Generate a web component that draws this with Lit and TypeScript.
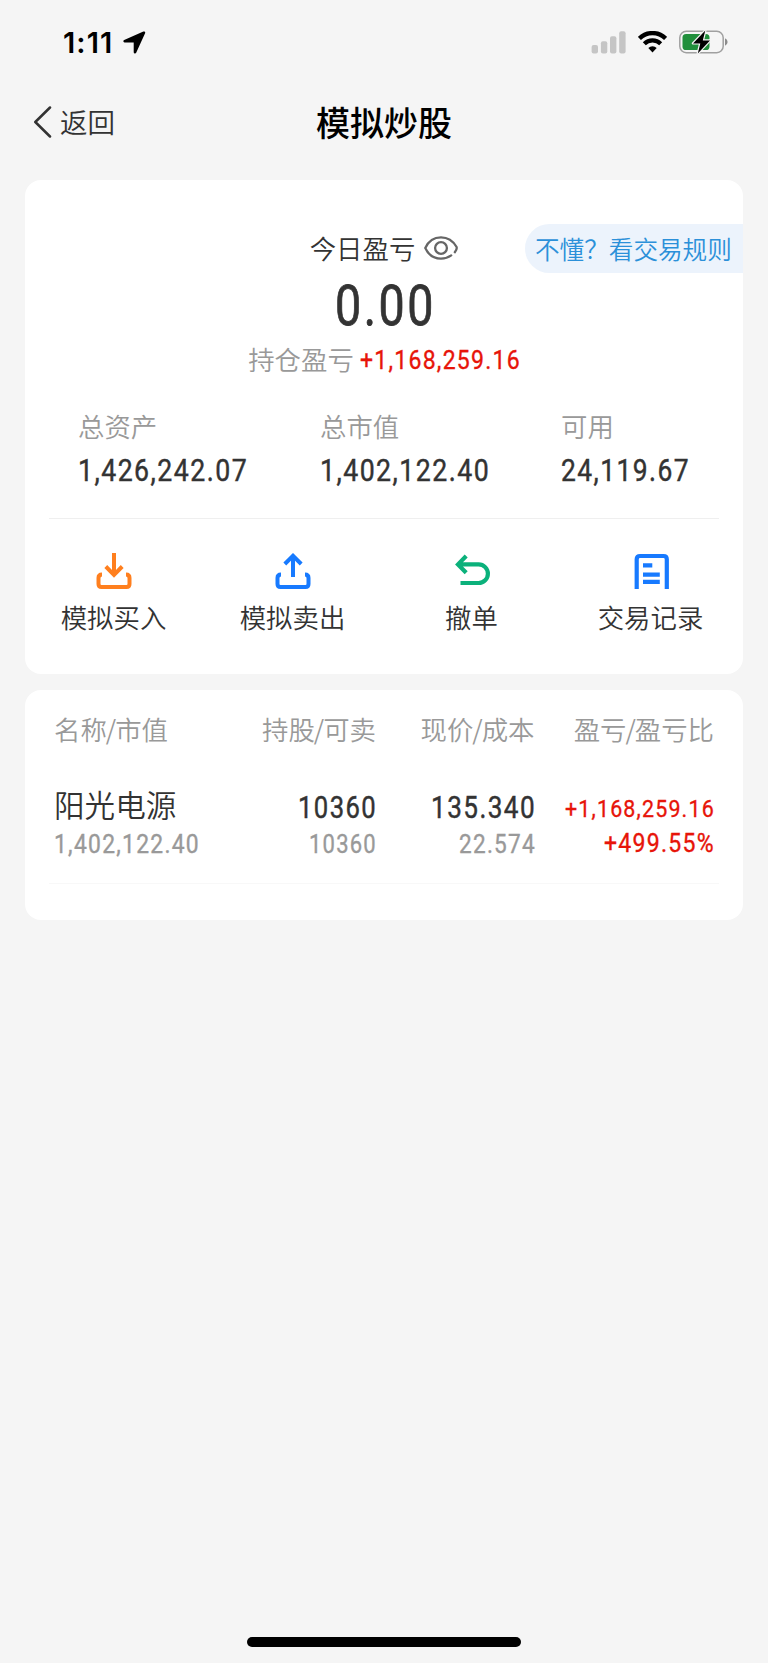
import { LitElement, html, css, svg } from "lit";
import { customElement, property } from "lit/decorators.js";

/** Narrow tabular figure text: `cap` is the digit height, `w` the run width. */
@customElement("din-number")
export class DinNumber extends LitElement {
  @property() value = "";
  @property({ type: Number }) w = 100;
  @property({ type: Number }) cap = 20;

  static styles = css`
    :host { display: block; }
    svg { display: block; overflow: visible; }
    text { font-family: Roboto, "Liberation Sans", sans-serif; font-weight: 400; letter-spacing: 0.055em; fill: currentColor; stroke: currentColor; stroke-width: 0.014em; }
  `;

  render() {
    return html`<svg width=${this.w} height=${this.cap}>
      <text x="0" y=${this.cap} font-size=${this.cap / 0.711} textLength=${this.w + this.cap * 0.05} lengthAdjust="spacingAndGlyphs">${this.value}</text>
    </svg>`;
  }
}

@customElement("status-bar")
export class StatusBar extends LitElement {
  static styles = css`
    :host { display: flex; justify-content: space-between; align-items: center; height: 84px; padding: 0 40px 0 63px; box-sizing: border-box; color: #000; }
    .group { display: flex; align-items: center; }
    .time { font: 600 29px/34px Inter, "Liberation Sans", sans-serif; letter-spacing: 1.1px; width: 60px; margin-top: 1px; white-space: nowrap; }
    .wifi { margin: 0 12px; }
    svg { display: block; }
  `;
  render() {
    return html`
      <div class="group">
        <span class="time">1:11</span>
        <svg width="23" height="23" viewBox="0 0 23 23"><path d="M20.9 1.8 L1.7 10.2 H11 Q12 10.2 12 11.2 V21.2 Z" stroke="#000" stroke-width="2.6" stroke-linejoin="round"/></svg>
      </div>
      <div class="group">
        <svg width="35" height="23" viewBox="0 0 35 23" fill="#c5c5c5">
          <rect x="0.6" y="14" width="6.4" height="8.4" rx="2"/><rect x="9.9" y="10.3" width="6.4" height="12.1" rx="2"/>
          <rect x="19" y="5.2" width="6.4" height="17.2" rx="2"/><rect x="28.2" y="0.3" width="6.4" height="22.1" rx="2"/>
        </svg>
        <svg class="wifi" width="29" height="22" viewBox="0 0 29 22">
          <path d="M1.4 7.4 A18.8 18.8 0 0 1 27.6 7.4" fill="none" stroke="#000" stroke-width="4.4"/>
          <path d="M6.3 12.7 A11.6 11.6 0 0 1 22.7 12.7" fill="none" stroke="#000" stroke-width="4.2"/>
          <path d="M10.3 17 A6.2 6.2 0 0 1 18.7 17 L14.5 21.4 Z"/>
        </svg>
        <svg width="49" height="24" viewBox="0 0 49 24">
          <rect x=".8" y="1.3" width="43.4" height="21.4" rx="6.4" fill="none" stroke="#a0a0a0" stroke-width="1.5"/>
          <path d="M46 8.3 Q48.6 9.4 48.6 12 T46 15.7Z" fill="#8c8c8c"/>
          <rect x="3.5" y="4" width="27" height="16" rx="3.6" fill="#218f3c"/>
          <path d="M26.3 .6 L14 13.4 H21.3 L18.8 23.4 L31 10.4 H23.8 Z" fill="#000" stroke="#f5f5f5" stroke-width="2.4" stroke-linejoin="round" paint-order="stroke"/>
        </svg>
      </div>`;
  }
}

const icons = {
  buy: svg`<g fill="none" stroke="#ff7f1e" stroke-width="4"><path d="M18 0V22M9.8 13.5 18 21.8 26.2 13.5"/><path d="M6.5 21.5Q3 21.5 3 25V31Q3 34 6 34H31Q34 34 34 31V25Q34 21.5 30.5 21.5" transform="translate(-.5)"/></g>`,
  sell: svg`<g fill="none" stroke="#177aff" stroke-width="4"><path d="M18 24V3M9.8 11 18 2.8 26.2 11"/><path d="M6.5 21.5Q3 21.5 3 25V31Q3 34 6 34H31Q34 34 34 31V25Q34 21.5 30.5 21.5" transform="translate(-.5)"/></g>`,
  undo: svg`<path d="M12.2 3 4 11.4 12.2 19.8M4 11.4H24.6A9.3 9.3 0 0 1 24.6 30H6.5" fill="none" stroke="#0bb17b" stroke-width="4.2"/>`,
  log: svg`<path d="M3.7 36V6.3Q3.7 3 7 3H30.5Q33.8 3 33.8 6.3V36M10 12.4H19.3M10 21.6H26.8M10 28.8H26.8" fill="none" stroke="#177aff" stroke-width="4.2"/>`,
};

@customElement("app-root")
export class AppRoot extends LitElement {
  static styles = css`
    :host { display: flex; flex-direction: column; box-sizing: border-box; height: 1663px; background: #f5f5f5; color: #333;
      font-family: "Noto Sans CJK SC", sans-serif; font-size: 26.4px; line-height: 36px; font-weight: 350; overflow: hidden; white-space: nowrap; }
    svg { display: block; }
    .nav { height: 96px; padding: 0 33px; display: grid; grid-template-columns: 1fr auto 1fr; align-items: start; }
    .back { display: flex; align-items: center; gap: 8px; font-size: 27.5px; height: 76px; }
    .back span { margin-top: -2px; }
    .title { margin: 0; font-size: 34px; font-weight: 500; line-height: 76px; color: #000; }
    .card { background: #fff; border-radius: 16px; margin: 0 25px; box-sizing: border-box; overflow: hidden; }
    .account { height: 494px; margin-bottom: 16px; }
    .today { display: grid; grid-template-columns: 1fr auto 1fr; align-items: center; margin-top: 44px; height: 49px; }
    .label { grid-column: 2; display: flex; align-items: center; gap: 9px; margin-top: -2px; }
    .rules { justify-self: end; width: 218px; height: 49px; box-sizing: border-box; border-radius: 25px 0 0 25px; padding-left: 10px; background: #ecf3fc; color: #2b90d9; font-size: 24.6px; line-height: 49px; }
    .total { display: flex; justify-content: center; margin-top: 13px; }
    .holding { display: flex; justify-content: center; align-items: center; gap: 6px; margin-top: 16px; color: #999; }
    .holding din-number { margin-top: 1px; }
    .red { color: #e71409; }
    .stats { display: grid; grid-template-columns: 242px 241px auto; padding-left: 53px; margin-top: 31px; color: #999; }
    .stat din-number { margin-top: 15px; color: #333; }
    .rule { height: 1px; margin: 37px 24px 0; background: #efefef; }
    .actions { display: grid; grid-template-columns: repeat(4, 179px); margin: 34px 0 0 -1px; }
    .action { display: flex; flex-direction: column; align-items: center; gap: 8px; }
    .positions { height: 230px; padding-top: 21px; }
    .row { display: grid; grid-template-columns: 150px 172px 158.5px 179.5px; padding-left: 29px; color: #999; }
    .slash { margin: 0 -1px; }
    .cell { display: flex; flex-direction: column; align-items: flex-end; }
    .cell:first-child { align-items: flex-start; }
    .holdings { margin-top: 35px; }
    .name { font-size: 30.6px; line-height: 44px; color: #333; }
    .main { color: #333; margin-top: 14px; }
    .sub { margin-top: 16px; }
    .name + .sub { margin-top: 8px; }
    .gain { margin-top: 17px; }
    .gain + .gain { margin-top: 16px; }
    .faint { margin-top: 30px; background: #f8f8f8; }
    .home { width: 274px; height: 10px; border-radius: 5px; background: #000; margin: auto auto 16px; }
  `;

  private stats = [["总资产", "1,426,242.07", 169], ["总市值", "1,402,122.40", 169], ["可用", "24,119.67", 128]] as const;
  private actions = [["模拟买入", icons.buy], ["模拟卖出", icons.sell], ["撤单", icons.undo], ["交易记录", icons.log]] as const;
  private columns = [["名称", "市值"], ["持股", "可卖"], ["现价", "成本"], ["盈亏", "盈亏比"]] as const;

  render() {
    return html`
      <status-bar></status-bar>
      <nav class="nav">
        <div class="back">
          <svg width="19" height="32" viewBox="0 0 19 32" fill="none" stroke="#333" stroke-width="2.5" stroke-linecap="round" stroke-linejoin="round"><path d="M17 1.5 2.3 16 17 30.5"/></svg>
          <span>返回</span>
        </div>
        <h1 class="title">模拟炒股</h1>
      </nav>
      <section class="card account">
        <div class="today">
          <div class="label">今日盈亏
            <svg width="34" height="24" viewBox="0 0 34 24" fill="none" stroke="#666" stroke-width="2.3" stroke-linecap="round"><path d="M30.8 16.2C32.3 14.3 33.2 12.8 32.6 11 29.2 5.2 23.5 1.4 17 1.4S4.4 5.2 1.3 12C4.4 18.8 10.5 22.6 17 22.6 20.8 22.6 24.5 21.4 27.2 19.4"/><circle cx="17" cy="12" r="5.9"/></svg>
          </div>
          <div class="rules">不懂？看交易规则</div>
        </div>
        <div class="total"><din-number value="0.00" .w=${99} .cap=${39}></din-number></div>
        <div class="holding">持仓盈亏<din-number class="red" value="+1,168,259.16" .w=${160} .cap=${18.5}></din-number></div>
        <div class="stats">
          ${this.stats.map(([l, v, w]) => html`<div class="stat">${l}<din-number value=${v} .w=${w} .cap=${22}></din-number></div>`)}
        </div>
        <div class="rule"></div>
        <div class="actions">
          ${this.actions.map(([l, i]) => html`<div class="action"><svg width="36" height="38" viewBox="0 0 36 38">${i}</svg>${l}</div>`)}
        </div>
      </section>
      <section class="card positions">
        <div class="row">
          ${this.columns.map(([a, b]) => html`<div class="cell"><div>${a}<span class="slash">/</span>${b}</div></div>`)}
        </div>
        <div class="row holdings">
          <div class="cell"><span class="name">阳光电源</span><din-number class="sub" value="1,402,122.40" .w=${145} .cap=${18.5}></din-number></div>
          <div class="cell"><din-number class="main" value="10360" .w=${78} .cap=${22}></din-number><din-number class="sub" value="10360" .w=${67} .cap=${18.5}></din-number></div>
          <div class="cell"><din-number class="main" value="135.340" .w=${104} .cap=${22}></din-number><din-number class="sub" value="22.574" .w=${76} .cap=${18.5}></din-number></div>
          <div class="cell"><din-number class="gain red" value="+1,168,259.16" .w=${149} .cap=${17.5}></din-number><din-number class="gain red" value="+499.55%" .w=${110} .cap=${18.5}></din-number></div>
        </div>
        <div class="rule faint"></div>
      </section>
      <div class="home"></div>
    `;
  }
}
